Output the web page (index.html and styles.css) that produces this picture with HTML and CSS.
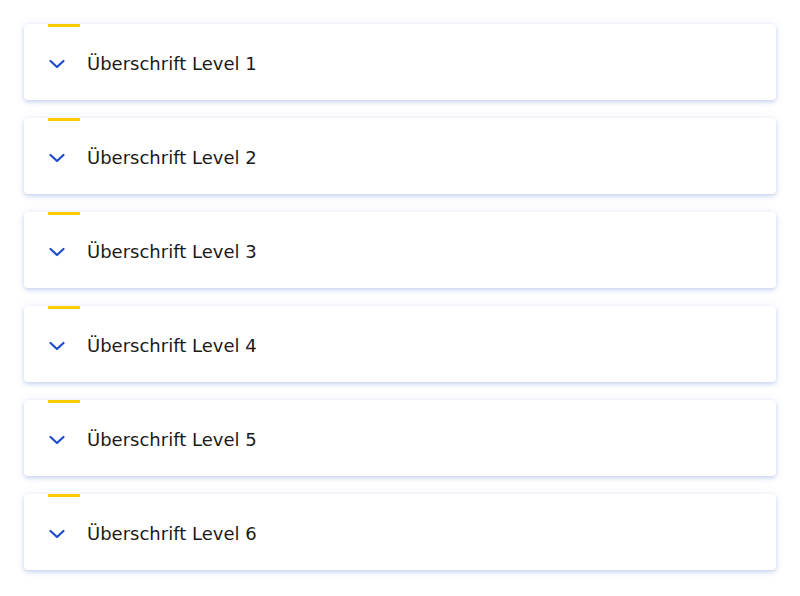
FILE: index.html
```html
<!DOCTYPE html>
<html lang="de">
<head>
<meta charset="utf-8">
<link rel="stylesheet" href="styles.css">
</head>
<body>
<div class="list">
  <div class="item"><span class="accent"></span><svg class="chev" width="18" height="12" viewBox="0 0 18 12"><path d="M2.5 3 L9 9 L15.5 3" fill="none" stroke="#1d4bcf" stroke-width="2.2" stroke-linecap="round" stroke-linejoin="round"/></svg><span class="title">Überschrift Level 1</span></div>
  <div class="item"><span class="accent"></span><svg class="chev" width="18" height="12" viewBox="0 0 18 12"><path d="M2.5 3 L9 9 L15.5 3" fill="none" stroke="#1d4bcf" stroke-width="2.2" stroke-linecap="round" stroke-linejoin="round"/></svg><span class="title">Überschrift Level 2</span></div>
  <div class="item"><span class="accent"></span><svg class="chev" width="18" height="12" viewBox="0 0 18 12"><path d="M2.5 3 L9 9 L15.5 3" fill="none" stroke="#1d4bcf" stroke-width="2.2" stroke-linecap="round" stroke-linejoin="round"/></svg><span class="title">Überschrift Level 3</span></div>
  <div class="item"><span class="accent"></span><svg class="chev" width="18" height="12" viewBox="0 0 18 12"><path d="M2.5 3 L9 9 L15.5 3" fill="none" stroke="#1d4bcf" stroke-width="2.2" stroke-linecap="round" stroke-linejoin="round"/></svg><span class="title">Überschrift Level 4</span></div>
  <div class="item"><span class="accent"></span><svg class="chev" width="18" height="12" viewBox="0 0 18 12"><path d="M2.5 3 L9 9 L15.5 3" fill="none" stroke="#1d4bcf" stroke-width="2.2" stroke-linecap="round" stroke-linejoin="round"/></svg><span class="title">Überschrift Level 5</span></div>
  <div class="item"><span class="accent"></span><svg class="chev" width="18" height="12" viewBox="0 0 18 12"><path d="M2.5 3 L9 9 L15.5 3" fill="none" stroke="#1d4bcf" stroke-width="2.2" stroke-linecap="round" stroke-linejoin="round"/></svg><span class="title">Überschrift Level 6</span></div>
</div>
</body>
</html>
```
FILE: styles.css
```css
html, body {
  margin: 0;
  padding: 0;
  background: #ffffff;
}
.list {
  display: flex;
  flex-direction: column;
  gap: 18px;
  padding: 24px;
}
.item {
  position: relative;
  height: 76px;
  background: #ffffff;
  border-radius: 4px;
  box-shadow: 0 2px 4px rgba(40, 80, 200, 0.22), 0 0 12px rgba(60, 90, 200, 0.08);
  display: flex;
  align-items: center;
  padding-left: 24px;
  padding-top: 3px;
  box-sizing: border-box;
}
.accent {
  position: absolute;
  left: 24px;
  top: 0;
  width: 32px;
  height: 3px;
  background: #ffcc00;
}
.chev {
  display: block;
  margin-right: 21px;
}
.title {
  font-family: "DejaVu Sans", Verdana, sans-serif;
  font-size: 18px;
  color: #1a1a1a;
}
```
